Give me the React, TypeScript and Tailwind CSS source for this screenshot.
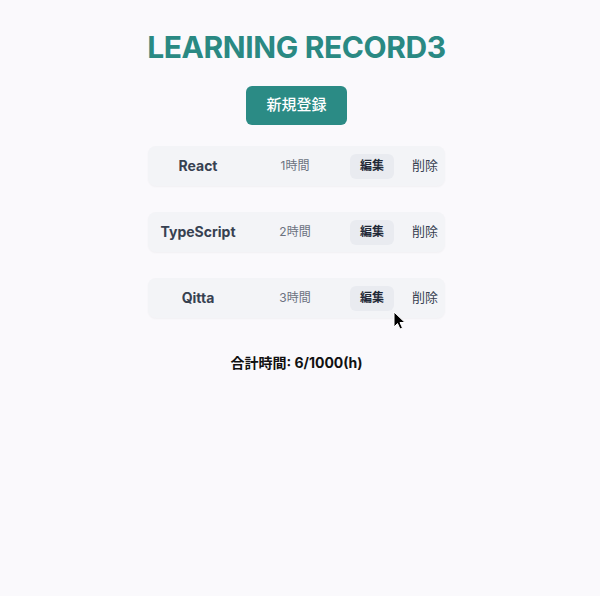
import React from "react";

const records = [
  { name: "React", time: 1 },
  { name: "TypeScript", time: 2 },
  { name: "Qitta", time: 3 },
];

export default function App() {
  return (
    <div
      className="relative min-h-[596px] w-full bg-[#faf9fc]"
      style={{ fontFamily: "Inter, 'Noto Sans CJK JP', sans-serif" }}
    >
      <div className="flex flex-col items-center pt-[29px] pr-[7px]">
        <h1 className="text-[30px] leading-[36px] font-bold text-[#2a8983] tracking-[-0.4px]">
          LEARNING RECORD3
        </h1>
        <button className="mt-[21px] h-[39px] rounded-md bg-[#2b8b85] px-5 text-[15px] font-medium text-white">
          新規登録
        </button>
        <div className="mt-[21px] flex flex-col gap-[26px]">
          {records.map((r) => (
            <div
              key={r.name}
              className="flex h-[40px] w-[297px] items-center rounded-lg bg-[#f3f4f7] shadow-[0_1px_2px_rgba(0,0,0,0.04)]"
            >
              <div className="w-[100px] text-center text-sm font-bold text-[#374151]">
                {r.name}
              </div>
              <div className="w-[94px] text-center text-xs text-[#6b7280]">
                {r.time}時間
              </div>
              <button className="ml-2 h-[25px] w-[44px] rounded-md bg-[#e9ebf0] text-xs font-bold text-[#1f2937]">
                編集
              </button>
              <button className="ml-[18px] text-[13px] text-[#374151]">削除</button>
            </div>
          ))}
        </div>
        <p className="mt-[34px] text-sm leading-[22px] font-bold text-[#111]">
          合計時間: 6/1000(h)
        </p>
      </div>
      <svg
        className="absolute left-[393px] top-[311px]"
        width="14"
        height="20"
        viewBox="0 0 14 20"
      >
        <path
          d="M1 1 L1 16 L4.5 12.5 L7 18 L9.5 17 L7 11.5 L12 11.5 Z"
          fill="#000"
          stroke="#fff"
          strokeWidth="1"
          strokeLinejoin="round"
        />
      </svg>
    </div>
  );
}
